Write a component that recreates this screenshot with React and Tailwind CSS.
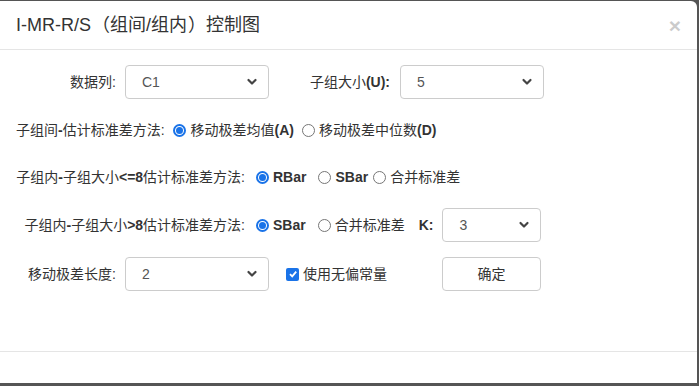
import React from "react";

const font = { fontFamily: '"Liberation Sans", "Noto Sans CJK SC", sans-serif' };

function Chevron() {
  return (
    <svg width="12" height="8" viewBox="0 0 12 8" className="shrink-0">
      <path d="M2.5 2 L6 5.5 L9.5 2" fill="none" stroke="#444" strokeWidth="2.2" strokeLinecap="round" strokeLinejoin="round" />
    </svg>
  );
}

function Select({ value, width }) {
  return (
    <div
      className="flex h-[34px] items-center justify-between rounded-[4px] border border-[#cccccc] bg-white pl-[16px] pr-[10px] text-[14px] text-[#555]"
      style={{ width }}
    >
      <span>{value}</span>
      <Chevron />
    </div>
  );
}

function Radio({ checked }) {
  if (checked) {
    return (
      <span className="flex h-[13px] w-[13px] shrink-0 items-center justify-center rounded-full border-[2px] border-[#1a73e8] bg-white">
        <span className="block h-[7px] w-[7px] rounded-full bg-[#1a73e8]" />
      </span>
    );
  }
  return <span className="block h-[13px] w-[13px] shrink-0 rounded-full border border-[#767676] bg-white" />;
}

function Checkbox() {
  return (
    <span className="flex h-[13px] w-[13px] shrink-0 items-center justify-center rounded-[2px] bg-[#1a73e8]">
      <svg width="10" height="10" viewBox="0 0 10 10">
        <path d="M2 5.2 L4.2 7.4 L8.2 2.6" fill="none" stroke="white" strokeWidth="1.8" />
      </svg>
    </span>
  );
}

export default function App() {
  return (
    <div className="h-screen w-full bg-[#555] pt-[1px] pr-[2px]" style={font}>
      <div className="flex h-[382px] flex-col rounded-tr-[6px] bg-white text-[#333]">
        <div className="flex h-[49px] items-center justify-between border-b border-[#e5e5e5] pl-[16px] pr-[16px]">
          <h4 className="text-[18px] font-normal text-[#333]">
            I-MR-R/S<span className="ml-[1px]">（</span>组间/组内<span className="ml-[1px]">）</span>控制图
          </h4>
          <span className="text-[21px] font-bold leading-none text-black opacity-20">×</span>
        </div>

        <div className="flex-1 px-[16px] pt-[15px] text-[14px]">
          <div className="flex h-[34px] items-center">
            <label className="w-[100px] text-right">数据列:</label>
            <div className="ml-[9px]">
              <Select value="C1" width={144} />
            </div>
            <label className="w-[121px] text-right">
              子组大小<b className="font-bold">(U):</b>
            </label>
            <div className="ml-[10px]">
              <Select value="5" width={144} />
            </div>
          </div>

          <div className="mt-[14px] flex h-[34px] items-center">
            <label>
              子组间<b>-</b>估计标准差方法:
            </label>
            <span className="ml-[8px]"><Radio checked /></span>
            <span className="ml-[5px]">
              移动极差均值<b>(A)</b>
            </span>
            <span className="ml-[8px]"><Radio /></span>
            <span className="ml-[4px]">
              移动极差中位数<b>(D)</b>
            </span>
          </div>

          <div className="mt-[13px] flex h-[34px] items-center">
            <label className="w-[229px] text-right">
              子组内<b>-</b>子组大小<b>&lt;=8</b>估计标准差方法:
            </label>
            <span className="ml-[11px]"><Radio checked /></span>
            <b className="ml-[4px]">RBar</b>
            <span className="ml-[12px]"><Radio /></span>
            <b className="ml-[4px]">SBar</b>
            <span className="ml-[5px]"><Radio /></span>
            <span className="ml-[4px]">合并标准差</span>
          </div>

          <div className="mt-[14px] flex h-[34px] items-center">
            <label className="w-[229px] text-right">
              子组内<b>-</b>子组大小<b>&gt;8</b>估计标准差方法:
            </label>
            <span className="ml-[11px]"><Radio checked /></span>
            <b className="ml-[4px]">SBar</b>
            <span className="ml-[12px]"><Radio /></span>
            <span className="ml-[4px]">合并标准差</span>
            <b className="ml-[14px]">K:</b>
            <div className="ml-[9px]">
              <Select value="3" width={99} />
            </div>
          </div>

          <div className="mt-[15px] flex h-[34px] items-center">
            <label className="w-[100px] text-right">移动极差长度:</label>
            <div className="ml-[9px]">
              <Select value="2" width={144} />
            </div>
            <span className="ml-[17px]"><Checkbox /></span>
            <span className="ml-[4px]">使用无偏常量</span>
            <button className="ml-[55px] flex h-[34px] w-[99px] items-center justify-center rounded-[4px] border border-[#cccccc] bg-white text-[14px] text-[#333]">
              确定
            </button>
          </div>
        </div>

        <div className="h-[32px] border-t border-[#e5e5e5]" />
      </div>
    </div>
  );
}
